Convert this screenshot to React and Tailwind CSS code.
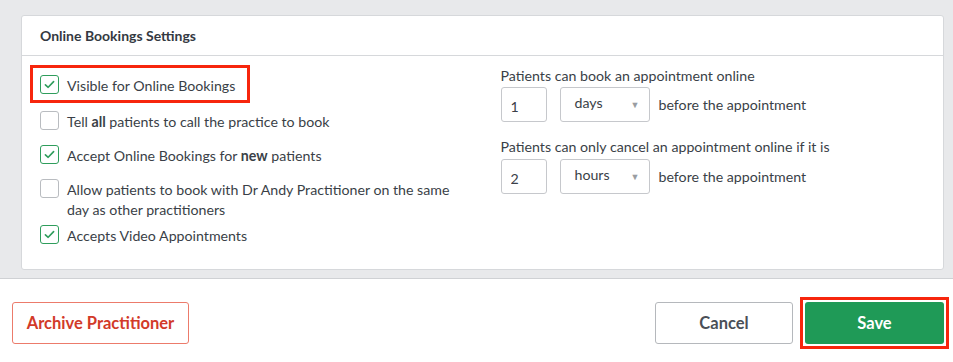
import React, { useState } from 'react'

function Check({ checked, onClick }) {
  return (
    <button
      type="button"
      onClick={onClick}
      className={`flex h-[19px] w-[19px] shrink-0 items-center justify-center rounded-[3px] border bg-white ${checked ? 'border-[#2f9d5c]' : 'border-[#b9bcc0]'}`}
    >
      {checked && (
        <svg width="11" height="9" viewBox="0 0 11 9" fill="none">
          <path d="M1.4 4.8 L4.2 7.3 L9.6 1.6" stroke="#2f9d5c" strokeWidth="1.6" strokeLinecap="round" strokeLinejoin="round" />
        </svg>
      )}
    </button>
  )
}

function Row({ checked, onToggle, children, className = '' }) {
  return (
    <div className={`flex items-start gap-[8px] ${className}`}>
      <Check checked={checked} onClick={onToggle} />
      <div className="mt-[1px] text-[14.2px] leading-[20px]">{children}</div>
    </div>
  )
}

function Unit({ value, unit }) {
  return (
    <div className="flex items-center">
      <input
        defaultValue={value}
        className="h-[35px] w-[46px] rounded-[3px] border border-[#c6c8cc] px-[9px] pt-[3px] text-[14.2px] text-[#3b4048] outline-none"
      />
      <div className="ml-[13px] flex h-[35px] w-[90px] items-center justify-between rounded-[3px] border border-[#c6c8cc] pl-[14px] pr-[9px] pb-[3px] text-[14.2px]">
        <span>{unit}</span>
        <span className="pt-[3px] text-[9px] text-[#9a9da2]">▼</span>
      </div>
      <span className="ml-[9px] text-[14.2px]">before the appointment</span>
    </div>
  )
}

export default function App() {
  const [opts, setOpts] = useState({ visible: true, callAll: false, newPatients: true, sameDay: false, video: true })
  const toggle = k => () => setOpts(o => ({ ...o, [k]: !o[k] }))

  return (
    <div className="min-h-[362px] bg-white text-[#3a3f47]" style={{ fontFamily: 'Lato, "Open Sans", sans-serif' }}>
      <div className="border-b border-[#cfd1d4] bg-[#e8e9eb] pb-[8px] pl-[21px] pr-[9px] pt-[15px]">
        <div className="rounded-[3px] border border-[#d6d8db] bg-white">
          <div className="flex h-[40px] items-center border-b border-[#d6d8db] px-[18px] text-[14px] font-bold text-[#343942]">
            Online Bookings Settings
          </div>
          <div className="grid h-[213px] grid-cols-2 pt-[9px]">
            <div className="pl-[18px] pt-[10px]">
              <div className="relative mb-[15px]">
                <span className="pointer-events-none absolute left-[-10px] top-[-10px] h-[38px] w-[220px] border-[3px] border-[#f7260d]" />
                <Row checked={opts.visible} onToggle={toggle('visible')}>Visible for Online Bookings</Row>
              </div>
              <Row className="mb-[13px]" checked={opts.callAll} onToggle={toggle('callAll')}>
                Tell <b>all</b> patients to call the practice to book
              </Row>
              <Row className="mb-[13px]" checked={opts.newPatients} onToggle={toggle('newPatients')}>
                Accept Online Bookings for <b>new</b> patients
              </Row>
              <Row className="mb-[5px]" checked={opts.sameDay} onToggle={toggle('sameDay')}>
                Allow patients to book with Dr Andy Practitioner on the same<br />day as other practitioners
              </Row>
              <Row checked={opts.video} onToggle={toggle('video')}>Accepts Video Appointments</Row>
            </div>
            <div className="pl-[18px]">
              <div className="pt-[1px] text-[14.2px] leading-[20px]">Patients can book an appointment online</div>
              <div className="mt-[1px]">
                <Unit value="1" unit="days" />
              </div>
              <div className="mt-[15px] text-[14.2px] leading-[20px]">Patients can only cancel an appointment online if it is</div>
              <div className="mt-[2px]">
                <Unit value="2" unit="hours" />
              </div>
            </div>
          </div>
        </div>
      </div>
      <div className="flex items-center justify-between pl-[12px] pr-[9px] pt-[23px]">
        <button className="h-[42px] w-[177px] rounded-[3px] border border-[#ec7b6b] bg-white text-[16.5px] font-bold text-[#d23a29]">
          Archive Practitioner
        </button>
        <div className="flex gap-[12px]">
          <button className="h-[42px] w-[138px] rounded-[3px] border border-[#b5b8bc] bg-white text-[16.5px] font-bold text-[#4a4f57]">
            Cancel
          </button>
          <div className="relative">
            <span className="pointer-events-none absolute -inset-[5px] border-[3px] border-[#f7260d]" />
            <button className="h-[42px] w-[139px] rounded-[3px] bg-[#1f9a57] text-[16.5px] font-bold text-white">
              Save
            </button>
          </div>
        </div>
      </div>
    </div>
  )
}
